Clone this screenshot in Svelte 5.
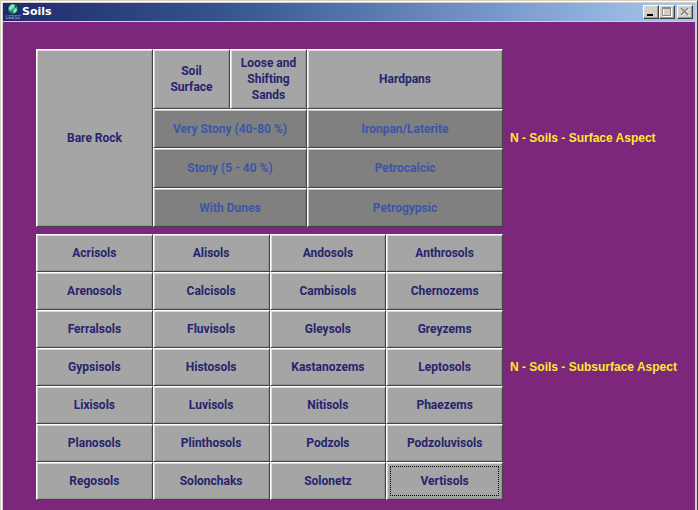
<script>
    let selected = 'Vertisols';

    const surface = [
        { name: 'Bare Rock', area: 'rock' },
        { name: 'Soil Surface', area: 'soil' },
        { name: 'Loose and Shifting Sands', area: 'sands' },
        { name: 'Hardpans', area: 'hardpans' },
        { name: 'Very Stony (40-80 %)', area: 'very-stony', dark: true },
        { name: 'Ironpan/Laterite', area: 'ironpan', dark: true },
        { name: 'Stony (5 - 40 %)', area: 'stony', dark: true },
        { name: 'Petrocalcic', area: 'petrocalcic', dark: true },
        { name: 'With Dunes', area: 'dunes', dark: true },
        { name: 'Petrogypsic', area: 'petrogypsic', dark: true }
    ];

    const subsurface = [
        'Acrisols', 'Alisols', 'Andosols', 'Anthrosols',
        'Arenosols', 'Calcisols', 'Cambisols', 'Chernozems',
        'Ferralsols', 'Fluvisols', 'Gleysols', 'Greyzems',
        'Gypsisols', 'Histosols', 'Kastanozems', 'Leptosols',
        'Lixisols', 'Luvisols', 'Nitisols', 'Phaezems',
        'Planosols', 'Plinthosols', 'Podzols', 'Podzoluvisols',
        'Regosols', 'Solonchaks', 'Solonetz', 'Vertisols'
    ];
</script>

<div class="window">
    <header>
        <svg class="logo" width="16" height="16" viewBox="0 0 16 16" aria-hidden="true">
            <circle cx="8" cy="5" r="6" fill="#102b35" />
            <circle cx="8" cy="5" r="5" fill="#238c80" />
            <path d="M4 3L7 0L10 1L9 4L7 5L6 7L4 5ZM10 4L12 5L11 8L9 9L8 7Z" fill="#8be0b9" />
            <path d="M9 1L12 3L10 3ZM5 7L8 9L6 9Z" fill="#155b5c" />
            <text x="8" y="15" text-anchor="middle">LEESZ</text>
        </svg>
        <h1>Soils</h1>
        <div class="controls">
            <button aria-label="Minimize">
                <svg width="12" height="10" viewBox="0 0 12 10"><path d="M2 7h6v2H2z" fill="#000" /></svg>
            </button>
            <button aria-label="Maximize" disabled>
                <svg width="12" height="10" viewBox="0 0 12 10" fill="none">
                    <path d="M2.5 1.5h8v8h-8z" stroke="#fff" />
                    <path d="M1.5 .5h8v8h-8zM2 1.5h7" stroke="#8b8985" />
                </svg>
            </button>
            <button class="close" aria-label="Close" disabled>
                <svg width="12" height="10" viewBox="0 0 12 10" fill="none">
                    <path d="M3 2l7 7M10 2L3 9" stroke="#fff" />
                    <path d="M2 1l7 7M9 1L2 8" stroke="#85837f" stroke-width="1.5" />
                </svg>
            </button>
        </div>
    </header>

    <main>
        <div class="surface">
            {#each surface as item}
                <button class="tile" class:dark={item.dark} class:selected={selected == item.name}
                    style="grid-area: {item.area}" on:click={() => selected = item.name}>
                    {item.name}
                </button>
            {/each}
        </div>
        <h2>N - Soils - Surface Aspect</h2>

        <div class="subsurface">
            {#each subsurface as name}
                <button class="tile" class:selected={selected == name} on:click={() => selected = name}>{name}</button>
            {/each}
        </div>
        <h2>N - Soils - Subsurface Aspect</h2>
    </main>
</div>

<style>
    .window {
        box-sizing: border-box;
        min-height: 100vh;
        display: flex;
        flex-direction: column;
        border-top: 1px solid #d4d0c8;
        border-left: 1px solid #d4d0c8;
        border-right: 1px solid #424650;
        background: #7c277c;
        box-shadow: inset 1px 1px #fff, inset 2px 2px #d4d0c8, inset -2px 0 #d4d0c8;
        font-family: "Liberation Sans", Arial, sans-serif;
    }
    header {
        display: flex;
        align-items: center;
        height: 18px;
        margin: 2px 2px 0;
        padding-right: 2px;
        border-bottom: 1px solid #d4d0c8;
        background: linear-gradient(to right, #1f2a6e, #35558f 32%, #6b8bc2 64%, #9abce6 92%, #a5c8ee);
    }
    .logo {
        margin: 0 1px 0 2px;
        overflow: visible;
    }
    .logo text {
        font: 5px "Liberation Mono", monospace;
        fill: #a3abc8;
    }
    h1 {
        margin: 0;
        font: bold 11px/16px "DejaVu Sans", sans-serif;
        color: #fff;
    }
    .controls {
        display: flex;
        margin-left: auto;
    }
    .controls button {
        display: flex;
        align-items: center;
        justify-content: center;
        box-sizing: border-box;
        width: 16px;
        height: 14px;
        padding: 0;
        border: 1px solid;
        border-color: #fff #404040 #404040 #fff;
        background: #d4d0c8;
        box-shadow: inset -1px -1px #999;
    }
    .controls .close {
        margin-left: 2px;
    }
    main {
        display: grid;
        grid-template-columns: minmax(0, 467fr) minmax(0, 192fr);
        row-gap: 7px;
        align-items: center;
        padding: 27px 2px 10px 35px;
    }
    .surface {
        display: grid;
        grid-template-columns: 117fr 77fr 77fr 196fr;
        grid-template-rows: 60px 39px 40px 39px;
        grid-template-areas:
            "rock soil sands hardpans"
            "rock very-stony very-stony ironpan"
            "rock stony stony petrocalcic"
            "rock dunes dunes petrogypsic";
    }
    .subsurface {
        display: grid;
        grid-template-columns: repeat(4, minmax(0, 1fr));
        grid-auto-rows: 38px;
    }
    h2 {
        margin: 0 0 0 7px;
        font-size: 12px;
        line-height: 16px;
        color: #ffe82e;
    }
    .tile {
        min-width: 0;
        padding: 0 8px;
        border: 1px solid;
        border-color: #fff #444 #444 #fff;
        background: #a5a5a5;
        box-shadow: inset 1px 1px #d8d8d8, inset -1px -1px #929292;
        font: bold 12px/16px Roboto, sans-serif;
        color: #26246e;
    }
    .dark {
        background: #808080;
        box-shadow: inset 1px 1px #c4c4c4, inset -1px -1px #777;
        color: #3d55a8;
    }
    .selected {
        outline: 1px dotted #000;
        outline-offset: -5px;
    }
</style>
